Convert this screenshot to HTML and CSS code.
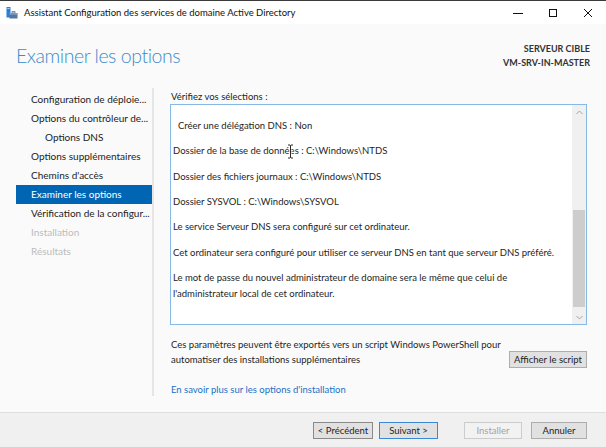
FILE: index.html
```html
<!DOCTYPE html>
<html lang="fr">
<head>
<meta charset="utf-8">
<title>Assistant Configuration des services de domaine Active Directory</title>
<link rel="stylesheet" href="styles.css">
</head>
<body>
<div class="window">
  <div class="titlebar">
    <svg class="app-icon" viewBox="0 0 12 12" aria-hidden="true">
      <rect x="0.5" y="0" width="4" height="10.5" fill="#2b7fd6"/>
      <rect x="1.3" y="1" width="2.4" height="0.8" fill="#cfe4fa"/>
      <rect x="3.5" y="6" width="8" height="5.5" fill="#54779e"/>
      <rect x="3.5" y="6" width="8" height="1.6" fill="#8aa6c4"/>
      <rect x="6" y="4.6" width="3" height="1.4" fill="none" stroke="#54779e" stroke-width="0.8"/>
    </svg>
    <span class="title">Assistant Configuration des services de domaine Active Directory</span>
    <div class="controls">
      <div class="ctl">
        <svg width="10" height="10" viewBox="0 0 10 10"><path d="M0 5.5h10" stroke="#111" stroke-width="1"/></svg>
      </div>
      <div class="ctl">
        <svg width="10" height="10" viewBox="0 0 10 10"><rect x="1.5" y="1.5" width="7" height="7" fill="none" stroke="#111" stroke-width="1"/></svg>
      </div>
      <div class="ctl">
        <svg width="10" height="10" viewBox="0 0 10 10"><path d="M1 1L9 9M9 1L1 9" stroke="#111" stroke-width="1"/></svg>
      </div>
    </div>
  </div>

  <div class="page">
    <header class="head">
      <h1 class="heading">Examiner les options</h1>
      <div class="target">
        <div>SERVEUR CIBLE</div>
        <div>VM-SRV-IN-MASTER</div>
      </div>
    </header>

    <div class="main">
      <nav class="steps">
        <div class="step">Configuration de déploie...</div>
        <div class="step">Options du contrôleur de...</div>
        <div class="step sub">Options DNS</div>
        <div class="step">Options supplémentaires</div>
        <div class="step">Chemins d'accès</div>
        <div class="step current">Examiner les options</div>
        <div class="step">Vérification de la configur...</div>
        <div class="step off">Installation</div>
        <div class="step off">Résultats</div>
      </nav>

      <section class="pane">
        <div class="label">Vérifiez vos sélections :</div>
        <div class="review">
          <div class="review-text">
            <p class="nested">Créer une délégation DNS : Non</p>
            <p>Dossier de la base de données : C:\Windows\NTDS</p>
            <p>Dossier des fichiers journaux : C:\Windows\NTDS</p>
            <p>Dossier SYSVOL : C:\Windows\SYSVOL</p>
            <p>Le service Serveur DNS sera configuré sur cet ordinateur.</p>
            <p>Cet ordinateur sera configuré pour utiliser ce serveur DNS en tant que serveur DNS préféré.</p>
            <p>Le mot de passe du nouvel administrateur de domaine sera le même que celui de<br>l'administrateur local de cet ordinateur.</p>
          </div>
          <div class="vscroll">
            <div class="arrow">
              <svg width="7" height="5" viewBox="0 0 7 5"><path d="M0.5 4L3.5 1L6.5 4" fill="none" stroke="#a3a3a3" stroke-width="1"/></svg>
            </div>
            <div class="track"><div class="thumb"></div></div>
            <div class="arrow">
              <svg width="7" height="5" viewBox="0 0 7 5"><path d="M0.5 1L3.5 4L6.5 1" fill="none" stroke="#a3a3a3" stroke-width="1"/></svg>
            </div>
          </div>
          <svg class="ibeam" width="7" height="15" viewBox="0 0 7 15" aria-hidden="true">
            <path d="M0.5 0.5h2.5l0.5 0.5 0.5-0.5h2.5v1.5h-2v11h2v1.5h-2.5l-0.5-0.5-0.5 0.5h-2.5v-1.5h2v-11h-2z" fill="#fff"/>
            <path d="M1 1h2l0.5 0.6 0.5-0.6h2M3.5 1.6v11.8M1 14h2l0.5-0.6 0.5 0.6h2" fill="none" stroke="#111" stroke-width="0.9"/>
          </svg>
        </div>

        <div class="export">
          <p>Ces paramètres peuvent être exportés vers un script Windows PowerShell pour<br>automatiser des installations supplémentaires</p>
          <button class="btn btn-script" type="button">Afficher le script</button>
        </div>
        <a class="more" href="#">En savoir plus sur les options d'installation</a>
      </section>
    </div>
  </div>

  <footer class="actions">
    <button class="btn btn-prev" type="button">&lt; Précédent</button>
    <button class="btn btn-next" type="button">Suivant &gt;</button>
    <button class="btn btn-install" type="button" disabled>Installer</button>
    <button class="btn btn-cancel" type="button">Annuler</button>
  </footer>
</div>
</body>
</html>
```

FILE: styles.css
```css
* {
  box-sizing: border-box;
}

html,
body {
  margin: 0;
}

body {
  width: 606px;
  height: 447px;
  overflow: hidden;
  font-family: Lato, "Noto Sans", sans-serif;
  font-size: 9.5px;
  color: #1e1e1e;
  background: #fafafa;
}

.window {
  display: flex;
  flex-direction: column;
  height: 447px;
}

/* window caption */
.titlebar {
  height: 24px;
  flex: none;
  display: flex;
  align-items: center;
  padding-left: 6px;
  background: #fff;
  border-top: 1px solid #3a3a3a;
  font-size: 9.5px;
  color: #111;
}

.app-icon {
  width: 12px;
  height: 12px;
  margin-right: 6px;
  margin-top: 1px;
}

.title {
  flex: 1;
  white-space: nowrap;
}

.controls {
  display: flex;
  align-self: stretch;
}

.ctl {
  width: 35px;
  display: flex;
  align-items: center;
  justify-content: center;
}

.ctl:last-child {
  width: 36px;
}

/* wizard page */
.page {
  flex: 1;
  min-height: 0;
  display: flex;
  flex-direction: column;
}

.head {
  height: 64px;
  flex: none;
  display: flex;
  justify-content: space-between;
  align-items: flex-start;
  padding: 18px 16px 0;
}

.heading {
  margin: 1.5px 0 0;
  font-family: Lato, "Open Sans", sans-serif;
  font-weight: 300;
  font-size: 19.5px;
  line-height: 24px;
  letter-spacing: -0.45px;
  color: #3d8bcb;
}

.target {
  text-align: right;
  font-weight: 700;
  font-size: 9px;
  line-height: 14px;
  color: #333;
}

.main {
  flex: 1;
  min-height: 0;
  display: grid;
  grid-template-columns: 138px 1fr;
  grid-template-rows: minmax(0, 1fr);
  padding: 0 0 16px 16px;
}

/* step list */
.steps {
  border-right: 2px solid #e6e6e6;
  padding-top: 2px;
  font-size: 10px;
}

.step {
  height: 19px;
  line-height: 19px;
  padding-left: 15px;
  white-space: nowrap;
  overflow: hidden;
  color: #222;
}

.step.sub {
  padding-left: 29px;
}

.step.current {
  background: #0066b3;
  color: #fff;
}

.step.off {
  color: #bcbcbc;
}

/* content pane */
.pane {
  padding: 0 19px 0 16px;
}

.label {
  padding: 1px 0 0 1px;
  line-height: 15px;
}

.review {
  position: relative;
  height: 221px;
  display: flex;
  background: #fff;
  border: 1px solid #86b9e8;
}

.review-text {
  flex: 1;
  padding: 13px 0 0 2px;
}

.review-text p {
  margin: 0 0 9.33px;
  line-height: 16px;
  white-space: nowrap;
}

.review-text .nested {
  padding-left: 5px;
}

.vscroll {
  width: 14px;
  display: flex;
  flex-direction: column;
  background: #f0f0f0;
}

.arrow {
  height: 14px;
  display: flex;
  align-items: center;
  justify-content: center;
}

.track {
  flex: 1;
  padding-top: 91px;
}

.thumb {
  height: 97px;
  margin: 0 1px;
  background: #cdcdcd;
}

.ibeam {
  position: absolute;
  left: 116px;
  top: 39px;
}

.export {
  margin-top: 12px;
  display: flex;
  justify-content: space-between;
  align-items: flex-end;
}

.export p {
  margin: 0 0 0 1px;
  line-height: 15px;
}

.more {
  display: block;
  margin: 15px 0 0 1px;
  line-height: 15px;
  color: #1a6fc6;
  text-decoration: none;
}

/* buttons */
.btn {
  height: 17px;
  padding: 0;
  font-family: inherit;
  font-size: 9.5px;
  line-height: 15px;
  color: #1e1e1e;
  background: #e1e1e1;
  border: 1px solid #adadad;
  border-radius: 0;
}

.btn-script {
  width: 78px;
  margin-bottom: -1px;
}

.actions {
  height: 35px;
  flex: none;
  display: flex;
  justify-content: flex-end;
  align-items: flex-start;
  padding: 9px 19px 0 0;
  background: #f0f0f0;
  border-top: 1px solid #dedede;
}

.btn-prev {
  width: 60px;
  border-color: #8a8a8a;
}

.btn-next {
  width: 59px;
  margin-left: 6px;
  border-color: #3a88d6;
}

.btn-install {
  width: 58px;
  margin-left: 26px;
  color: #a3a3a3;
  background: #f2f2f2;
  border-color: #cccccc;
}

.btn-cancel {
  width: 56px;
  margin-left: 9px;
}
```
